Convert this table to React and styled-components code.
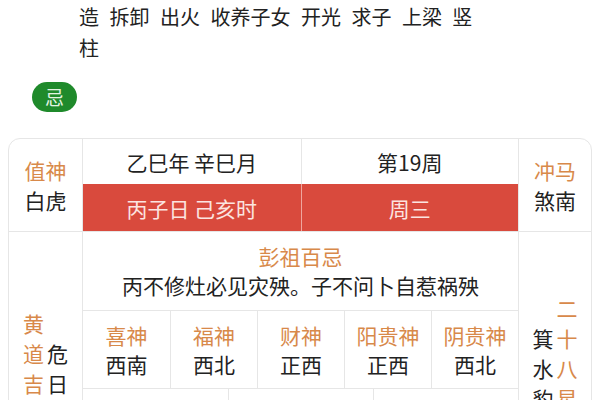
import React from "react"
import styled, { createGlobalStyle } from "styled-components"

const GlobalStyle = createGlobalStyle`
  body {
    margin: 0;
    background: #fff;
    font-family: "Noto Sans CJK SC", "Noto Sans", sans-serif;
    color: #222;
  }
`

const orange = "#d8894a"
const line = "#e6e6e6"

const Page = styled.div`
  width: 600px;
  padding-top: 1px;
`

const TextRow = styled.div`
  display: flex;
  padding-left: 32px;
  gap: 2px;
`

const BadgeSlot = styled.div`
  width: 45px;
  flex: none;
`

const Words = styled.div`
  width: 410px;
  font-size: 20px;
  line-height: 31px;
  word-spacing: 6px;
  line-break: anywhere;
`

const Badge = styled.div`
  width: 45px;
  height: 30px;
  border-radius: 15px;
  background: #1f8a2b;
  color: #e3f3e1;
  font-size: 19px;
  line-height: 30px;
  text-align: center;
  margin: 19px 0 26px;
`

const Card = styled.div`
  margin: 0 8px;
  border: 1px solid ${line};
  border-radius: 12px;
  overflow: hidden;
  display: grid;
  grid-template-columns: 73px 1fr 73px;
  font-size: 21px;
`

const Cell = styled.div`
  border-left: ${p => (p.$left ? `1px solid ${line}` : "none")};
  border-top: ${p => (p.$top ? `1px solid ${line}` : "none")};
  display: flex;
  align-items: center;
  justify-content: center;
`

const Stack = styled.div`
  line-height: 30px;
  text-align: center;
`

const Label = styled.div`
  color: ${orange};
`

const DateGrid = styled.div`
  display: grid;
  grid-template-columns: 1fr 1fr;
  grid-template-rows: 45px 47px;
`

const DateCell = styled.div`
  display: flex;
  align-items: center;
  justify-content: center;
  background: ${p => (p.$red ? "#d94a3d" : "#fff")};
  color: ${p => (p.$red ? "#fce4e0" : "#222")};
  border-left: ${p => (p.$split ? `1px solid ${p.$red ? "#efa69e" : line}` : "none")};
`

const Details = styled.div`
  display: flex;
  flex-direction: column;
`

const Saying = styled.div`
  height: 78px;
  display: flex;
  flex-direction: column;
  justify-content: center;
  align-items: center;
  line-height: 29px;
`

const CellRow = styled.div`
  display: grid;
  grid-template-columns: repeat(${p => p.$n}, 1fr);
  border-top: 1px solid ${line};
  height: ${p => p.$h}px;
`

const InfoCell = styled.div`
  display: flex;
  flex-direction: column;
  justify-content: center;
  align-items: center;
  line-height: 29px;
  border-left: ${p => (p.$first ? "none" : `1px solid ${line}`)};
  text-align: center;
`

const VerticalPair = styled.div`
  display: flex;
  align-items: center;
  gap: 3px;
`

const VerticalText = styled.div`
  width: 21px;
  line-height: 30px;
  color: ${p => (p.$accent ? orange : "#222")};
  text-align: center;
`

const vert = s => s.split("").map((c, i) => <div key={i}>{c}</div>)

const gods = [
  ["喜神", "西南"],
  ["福神", "西北"],
  ["财神", "正西"],
  ["阳贵神", "正西"],
  ["阴贵神", "西北"]
]

const extras = [
  ["五行", "涧下水", "闭执位"],
  ["冲煞", "冲马(庚午)", "煞南"],
  ["胎神", "仓库栖", "外东南"]
]

export default function App() {
  return (
    <Page>
      <GlobalStyle />
      <TextRow>
        <BadgeSlot />
        <Words>造 拆卸 出火 收养子女 开光 求子 上梁 竖柱</Words>
      </TextRow>
      <TextRow>
        <Badge>忌</Badge>
      </TextRow>
      <Card>
        <Cell>
          <Stack>
            <Label>值神</Label>
            <div>白虎</div>
          </Stack>
        </Cell>
        <Cell $left>
          <DateGrid style={{ width: "100%" }}>
            <DateCell>乙巳年 辛巳月</DateCell>
            <DateCell $split>第19周</DateCell>
            <DateCell $red>丙子日 己亥时</DateCell>
            <DateCell $red $split>周三</DateCell>
          </DateGrid>
        </Cell>
        <Cell $left>
          <Stack>
            <Label>冲马</Label>
            <div>煞南</div>
          </Stack>
        </Cell>

        <Cell $top>
          <VerticalPair>
            <VerticalText $accent>{vert("黄道吉日")}</VerticalText>
            <VerticalText>{vert("危日")}</VerticalText>
          </VerticalPair>
        </Cell>
        <Cell $top $left>
          <Details style={{ width: "100%" }}>
            <Saying>
              <Label>彭祖百忌</Label>
              <div>丙不修灶必见灾殃。子不问卜自惹祸殃</div>
            </Saying>
            <CellRow $n={5} $h={77}>
              {gods.map(([k, v], i) => (
                <InfoCell key={k} $first={i === 0}>
                  <Label>{k}</Label>
                  <div>{v}</div>
                </InfoCell>
              ))}
            </CellRow>
            <CellRow $n={3} $h={114}>
              {extras.map(([k, a, b], i) => (
                <InfoCell key={k} $first={i === 0}>
                  <Label>{k}</Label>
                  <div>{a}</div>
                  <div>{b}</div>
                </InfoCell>
              ))}
            </CellRow>
          </Details>
        </Cell>
        <Cell $top $left>
          <VerticalPair>
            <VerticalText>{vert("箕水豹")}</VerticalText>
            <VerticalText $accent>{vert("二十八星宿")}</VerticalText>
          </VerticalPair>
        </Cell>
      </Card>
    </Page>
  )
}
